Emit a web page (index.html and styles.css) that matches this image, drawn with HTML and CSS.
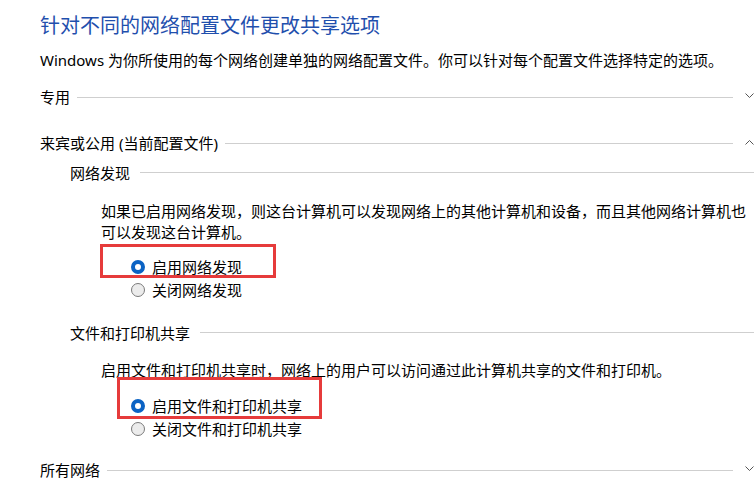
FILE: index.html
```html
<!DOCTYPE html>
<html lang="zh-CN">
<head>
    <meta charset="UTF-8">
    <title>高级共享设置</title>
    <link rel="stylesheet" href="styles.css">
</head>
<body>
    <div class="page">
        <h1>针对不同的网络配置文件更改共享选项</h1>
        <p class="desc">Windows 为你所使用的每个网络创建单独的网络配置文件。你可以针对每个配置文件选择特定的选项。</p>

        <div class="section-head first">
            <span>专用</span>
            <span class="rule"></span>
            <svg class="chevron" width="9" height="6" viewBox="0 0 9 6"><polyline points="0.5,0.5 4.5,4.5 8.5,0.5" fill="none" stroke="#555" stroke-width="1"/></svg>
        </div>

        <div class="section-head public">
            <span>来宾或公用 (当前配置文件)</span>
            <span class="rule"></span>
            <svg class="chevron" width="9" height="6" viewBox="0 0 9 6"><polyline points="0.5,5.5 4.5,1.5 8.5,5.5" fill="none" stroke="#555" stroke-width="1"/></svg>
        </div>

        <div class="group-head discovery">
            <span>网络发现</span>
            <span class="rule"></span>
        </div>
        <p class="para discovery-text">如果已启用网络发现，则这台计算机可以发现网络上的其他计算机和设备，而且其他网络计算机也可以发现这台计算机。</p>
        <div class="options discovery-options">
            <div class="mark mark-discovery"></div>
            <label class="option"><span class="radio checked"></span>启用网络发现</label>
            <label class="option"><span class="radio"></span>关闭网络发现</label>
        </div>

        <div class="group-head sharing">
            <span>文件和打印机共享</span>
            <span class="rule"></span>
        </div>
        <p class="para sharing-text">启用文件和打印机共享时，网络上的用户可以访问通过此计算机共享的文件和打印机。</p>
        <div class="options sharing-options">
            <div class="mark mark-sharing"></div>
            <label class="option"><span class="radio checked"></span>启用文件和打印机共享</label>
            <label class="option"><span class="radio"></span>关闭文件和打印机共享</label>
        </div>

        <div class="section-head all">
            <span>所有网络</span>
            <span class="rule"></span>
            <svg class="chevron" width="9" height="6" viewBox="0 0 9 6"><polyline points="0.5,0.5 4.5,4.5 8.5,0.5" fill="none" stroke="#555" stroke-width="1"/></svg>
        </div>
    </div>
</body>
</html>
```

FILE: styles.css
```css
body {
    margin: 0;
    background: #fff;
    color: #000;
    font-family: "Noto Sans", "Noto Sans CJK SC", sans-serif;
    font-size: 15px;
    overflow: hidden;
}

.page {
    padding-left: 40px;
}

h1 {
    margin: 0;
    padding-top: 12px;
    font-size: 20px;
    line-height: 28px;
    font-weight: normal;
    color: #1f4fad;
}

.desc {
    margin: 9px 0 0;
    line-height: 22px;
}

.section-head, .group-head {
    display: flex;
    align-items: center;
    height: 22px;
    white-space: nowrap;
}

.rule {
    flex: 1;
    border-top: 1px solid #cfcfcf;
    margin-left: 7px;
    margin-top: 2px;
}

.chevron {
    margin-left: 12px;
    flex-shrink: 0;
}

.section-head.first {
    margin-top: 14px;
}

.section-head.public {
    margin-top: 24px;
}

.section-head.all {
    margin-top: 18px;
}

.group-head {
    padding-left: 30px;
}

.group-head .rule {
    margin-left: 10px;
    margin-top: 0;
}

.group-head.discovery {
    margin-top: 8px;
}

.group-head.sharing {
    margin-top: 20px;
}

.para {
    margin: 0;
    padding-left: 61px;
    line-height: 21px;
}

.discovery-text {
    margin-top: 18px;
}

.sharing-text {
    margin-top: 17px;
}

.options {
    position: relative;
    margin-left: 61px;
}

.discovery-options {
    margin-top: 12px;
}

.sharing-options {
    margin-top: 13px;
}

.option {
    display: flex;
    align-items: center;
    height: 23px;
    padding-left: 30px;
}

.radio {
    box-sizing: border-box;
    width: 14px;
    height: 14px;
    border-radius: 50%;
    border: 1px solid #7a7a7a;
    background: #ececec;
    margin-right: 7px;
    flex-shrink: 0;
}

.radio.checked {
    border: 4px solid #0b63c4;
    background: #fff;
}

.mark {
    position: absolute;
    border: 3px solid #e63b3b;
    box-sizing: border-box;
}

.mark-discovery {
    left: -1px;
    top: -11px;
    width: 176px;
    height: 34px;
}

.mark-sharing {
    left: 16px;
    top: -17px;
    width: 205px;
    height: 42px;
}
```
